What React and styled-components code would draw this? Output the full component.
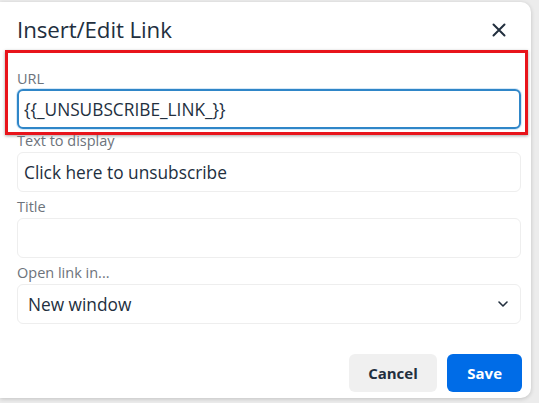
import React, { useState } from 'react';
import styled, { createGlobalStyle } from 'styled-components';

const GlobalStyle = createGlobalStyle`
  html, body {
    margin: 0;
    padding: 0;
    background: #ececec;
    font-family: "Open Sans", "Noto Sans", sans-serif;
  }
`;

const Page = styled.div`
  width: 539px;
  height: 403px;
  padding-top: 2px;
  box-sizing: border-box;
  overflow: hidden;
`;

const Dialog = styled.div`
  width: 531px;
  height: 396px;
  background: #ffffff;
  border-radius: 0 10px 10px 0;
  box-shadow: 0 1px 4px rgba(0, 0, 0, 0.18);
  box-sizing: border-box;
  display: flex;
  flex-direction: column;
`;

const Header = styled.div`
  display: flex;
  align-items: center;
  justify-content: space-between;
  padding: 13px 20px 0 17px;
  height: 42px;
  box-sizing: border-box;
`;

const Title = styled.h1`
  margin: 0;
  font-size: 22.3px;
  font-weight: 400;
  color: #222f3e;
  letter-spacing: -0.1px;
`;

const CloseButton = styled.button`
  border: none;
  background: none;
  padding: 0;
  width: 24px;
  height: 24px;
  display: flex;
  align-items: center;
  justify-content: center;
  color: #222f3e;
  cursor: pointer;
`;

const Body = styled.div`
  display: flex;
  flex-direction: column;
  padding: 0 10px 0 5px;
  margin-top: 6px;
`;

const Highlight = styled.div`
  border: 3px solid #e8141b;
  box-shadow: 0 1px 3px rgba(0, 0, 0, 0.35);
  padding: 14px 4px 3px 9px;
  width: 523px;
  box-sizing: border-box;
`;

const Field = styled.div`
  display: flex;
  flex-direction: column;
  padding: 0 10px 0 17px;
  margin-top: ${(p) => p.$top || 0}px;
`;

const Label = styled.label`
  font-size: 14.5px;
  color: #6d737b;
  line-height: 18px;
  height: 18px;
  margin-bottom: 2px;
  white-space: nowrap;
`;

const Input = styled.input`
  height: 40px;
  box-sizing: border-box;
  border: ${(p) => (p.$focused ? '2px solid #2f86c8' : '1px solid #eeeeee')};
  box-shadow: ${(p) => (p.$focused ? '0 0 0 1px #d6e8f7' : 'none')};
  border-radius: 6px;
  padding: 0 ${(p) => (p.$focused ? 5 : 6)}px;
  font-family: inherit;
  font-size: 17.3px;
  color: #222f3e;
  background: #fff;
  outline: none;
  width: 100%;
`;

const SelectBox = styled.div`
  height: 40px;
  box-sizing: border-box;
  border: 1px solid #eeeeee;
  border-radius: 6px;
  padding: 0 11px 0 10px;
  display: flex;
  align-items: center;
  justify-content: space-between;
  font-size: 17.3px;
  color: #222f3e;
`;

const Footer = styled.div`
  display: flex;
  justify-content: flex-end;
  gap: 10px;
  padding: 0 9px 0 0;
  margin-top: auto;
  margin-bottom: 6px;
`;

const Button = styled.button`
  height: 38px;
  padding: 0 ${(p) => (p.$primary ? 20 : 19.5)}px;
  border: none;
  border-radius: 6px;
  font-family: inherit;
  font-weight: 700;
  font-size: 15px;
  background: ${(p) => (p.$primary ? '#006ce7' : '#f0f0f0')};
  color: ${(p) => (p.$primary ? '#ffffff' : '#222f3e')};
  cursor: pointer;
`;

const Chevron = () => (
  <svg width="12" height="12" viewBox="0 0 12 12" fill="none">
    <path d="M2 4l4 4 4-4" stroke="#222f3e" strokeWidth="1.6" strokeLinecap="round" strokeLinejoin="round" />
  </svg>
);

const CloseIcon = () => (
  <svg width="14" height="14" viewBox="0 0 14 14" fill="none">
    <path d="M1.5 1.5l11 11M12.5 1.5l-11 11" stroke="#222f3e" strokeWidth="2" strokeLinecap="round" />
  </svg>
);

export default function App() {
  const [url, setUrl] = useState('{{_UNSUBSCRIBE_LINK_}}');
  const [text, setText] = useState('Click here to unsubscribe');
  const [title, setTitle] = useState('');

  return (
    <Page>
      <GlobalStyle />
      <Dialog>
        <Header>
          <Title>Insert/Edit Link</Title>
          <CloseButton aria-label="Close">
            <CloseIcon />
          </CloseButton>
        </Header>
        <Body>
          <Highlight>
            <Label>URL</Label>
            <Input $focused value={url} onChange={(e) => setUrl(e.target.value)} />
          </Highlight>
        </Body>
        <Field $top={-3}>
          <Label>Text to display</Label>
          <Input value={text} onChange={(e) => setText(e.target.value)} />
        </Field>
        <Field $top={6}>
          <Label>Title</Label>
          <Input value={title} onChange={(e) => setTitle(e.target.value)} />
        </Field>
        <Field $top={6}>
          <Label>Open link in...</Label>
          <SelectBox>
            <span>New window</span>
            <Chevron />
          </SelectBox>
        </Field>
        <Footer>
          <Button>Cancel</Button>
          <Button $primary>Save</Button>
        </Footer>
      </Dialog>
    </Page>
  );
}
